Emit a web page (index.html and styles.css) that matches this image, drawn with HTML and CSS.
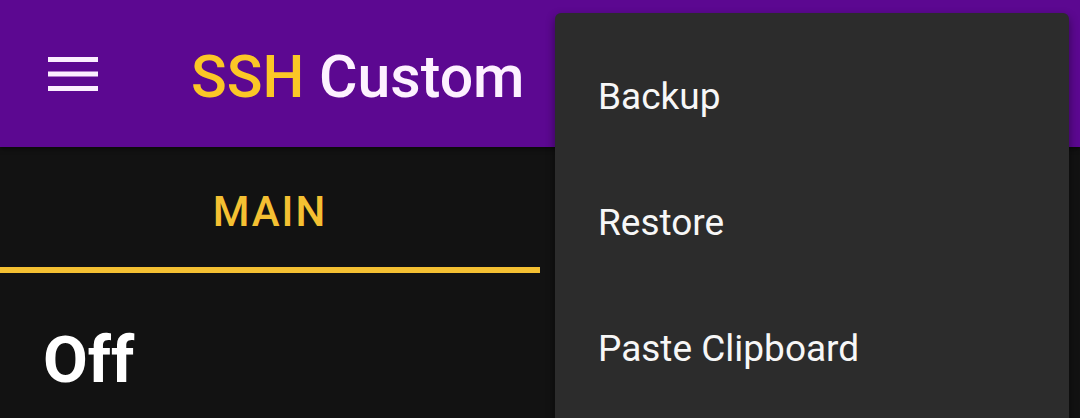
FILE: index.html
```html
<!DOCTYPE html>
<html>
<head>
<meta charset="utf-8">
<link rel="stylesheet" href="styles.css">
</head>
<body>
<div class="screen">
  <header class="appbar">
    <svg class="menu-icon" width="50" height="34" viewBox="0 0 50 34">
      <rect x="0" y="0" width="50" height="5" fill="#fbeeff"/>
      <rect x="0" y="14.5" width="50" height="5" fill="#fbeeff"/>
      <rect x="0" y="29" width="50" height="5" fill="#fbeeff"/>
    </svg>
    <h1 class="title"><span class="accent">SSH</span> Custom</h1>
  </header>
  <nav class="tabs">
    <div class="tab active">MAIN</div>
    <div class="tab"></div>
  </nav>
  <main class="content">
    <div class="status">Off</div>
  </main>
  <div class="popup">
    <div class="item">Backup</div>
    <div class="item">Restore</div>
    <div class="item">Paste Clipboard</div>
  </div>
</div>
</body>
</html>
```
FILE: styles.css
```css
* { box-sizing: border-box; }
html, body {
  margin: 0;
  padding: 0;
  background: #121212;
  font-family: Roboto, "Liberation Sans", sans-serif;
}
.screen {
  position: relative;
  width: 1080px;
  height: 418px;
  overflow: hidden;
  background: #121212;
}
.appbar {
  height: 147px;
  background: #5c0891;
  display: flex;
  align-items: center;
  padding-left: 48px;
  box-shadow: 0 2px 4px rgba(0,0,0,0.5);
  position: relative;
  z-index: 1;
}
.menu-icon {
  display: block;
  flex: none;
}
.title {
  margin: 6px 0 0 93px;
  font-size: 59px;
  font-weight: 500;
  color: #fdf1ff;
  line-height: 1;
}
.accent { color: #fbc726; }
.tabs {
  display: flex;
  height: 126px;
  background: #121212;
}
.tab {
  width: 540px;
  height: 126px;
  display: flex;
  align-items: center;
  justify-content: center;
  font-size: 42px;
  font-weight: 500;
  letter-spacing: 2px;
  color: #f4c032;
}
.tab.active {
  border-bottom: 6px solid #f4c032;
  padding-top: 9px;
}
.content {
  padding: 55px 0 0 43px;
}
.status {
  font-size: 65px;
  font-weight: 700;
  color: #ffffff;
  line-height: 1;
}
.popup {
  position: absolute;
  left: 555px;
  top: 13px;
  width: 514px;
  height: 440px;
  background: #2c2c2c;
  border-radius: 6px;
  padding-top: 20px;
  box-shadow: 0 4px 10px rgba(0,0,0,0.45);
  z-index: 2;
}
.item {
  height: 126px;
  display: flex;
  align-items: center;
  padding-left: 43px;
  font-size: 37px;
  color: #f7f7f7;
}
```
